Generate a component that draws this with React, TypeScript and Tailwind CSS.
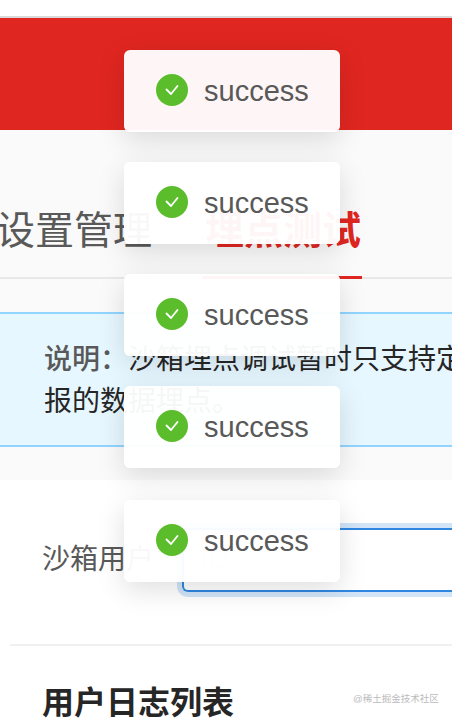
const font = "font-['Liberation_Sans','Noto_Sans_CJK_SC',sans-serif]";

const toasts = [
    { id: 1, offset: 'mt-[50px]' },
    { id: 2, offset: 'mt-[30px]' },
    { id: 3, offset: 'mt-[30px]' },
    { id: 4, offset: 'mt-[30px]' },
    { id: 5, offset: 'mt-[32px]' },
];

function Toast({ className }: { className: string }) {
    return (
        <div className={`flex h-[82px] w-[216px] items-center rounded-[6px] bg-white/[0.96] pl-8 shadow-[0_8px_28px_rgba(0,0,0,0.13)] ${className}`}>
            <svg width="32" height="32" viewBox="0 0 32 32" className="-mt-[2px] shrink-0">
                <circle cx="16" cy="16" r="16" fill="#5cbd2c" />
                <path d="M10.5 15.5l4.5 4.5 6.5-8" fill="none" stroke="#fff" strokeWidth="1.8" strokeLinecap="round" strokeLinejoin="round" />
            </svg>
            <span className="ml-4 text-[29px] leading-none text-[#595959]">success</span>
        </div>
    );
}

export default function App() {
    return (
        <div className={`relative h-[718px] w-[452px] overflow-hidden bg-white ${font}`}>
            <div className="h-4 bg-white" />
            <div className="h-[2px] bg-[#d9d9d9]" />
            <div className="h-[112px] bg-[#e02620]" />

            <div className="h-[350px] bg-[#fafafa]">
                <div className="h-[149px] border-b-2 border-[#e8e8e8]">
                    <div className="-ml-[4px] flex h-[149px] items-end">
                        <span className="w-[206px] whitespace-nowrap pb-[26px] text-[39px] leading-[44px] text-[#595959]">设置管理</span>
                        <span className="whitespace-nowrap border-b-[3px] border-[#e02620] pb-[23px] pl-[3px] pr-[1px] text-[39px] font-bold leading-[44px] text-[#e02620]">埋点测试</span>
                    </div>
                </div>
                <div className="mt-[33px] h-[135px] border-y-2 border-[#91d5ff] bg-[#e6f7ff] pl-[44px] pt-[25px] text-[28px] leading-[42px] text-[#262626]">
                    <p className="w-[500px]">
                        <span className="font-medium text-[#595959]">说明：</span>沙箱埋点调试暂时只支持定时上
                    </p>
                    <p>报的数据埋点。</p>
                </div>
            </div>

            <div className="pl-[10px]">
                <div className="flex h-[166px] items-center border-b-2 border-[#f0f0f0] pb-[4px] pl-[32px]">
                    <span className="w-[140px] shrink-0 whitespace-nowrap text-[28px] text-[#595959]">沙箱用户</span>
                    <div className="flex h-[64px] flex-1 items-center rounded-l-[6px] border-2 border-r-0 border-[#2f86e0] pl-4 text-[28px] text-[#d9d9d9] shadow-[0_0_0_5px_rgba(47,134,224,0.22)]">
                        ID
                    </div>
                </div>
                <h2 className="whitespace-nowrap pl-[32px] pt-[35px] text-[32px] font-bold leading-[44px] text-[#262626]">用户日志列表</h2>
            </div>

            <span className="absolute left-[353px] top-[692px] text-[9.5px] text-[#bbbbbb]">@稀土掘金技术社区</span>

            <div className="absolute left-[124px] top-0 flex flex-col">
                {toasts.map((toast) => (
                    <Toast key={toast.id} className={toast.offset} />
                ))}
            </div>
        </div>
    );
}
